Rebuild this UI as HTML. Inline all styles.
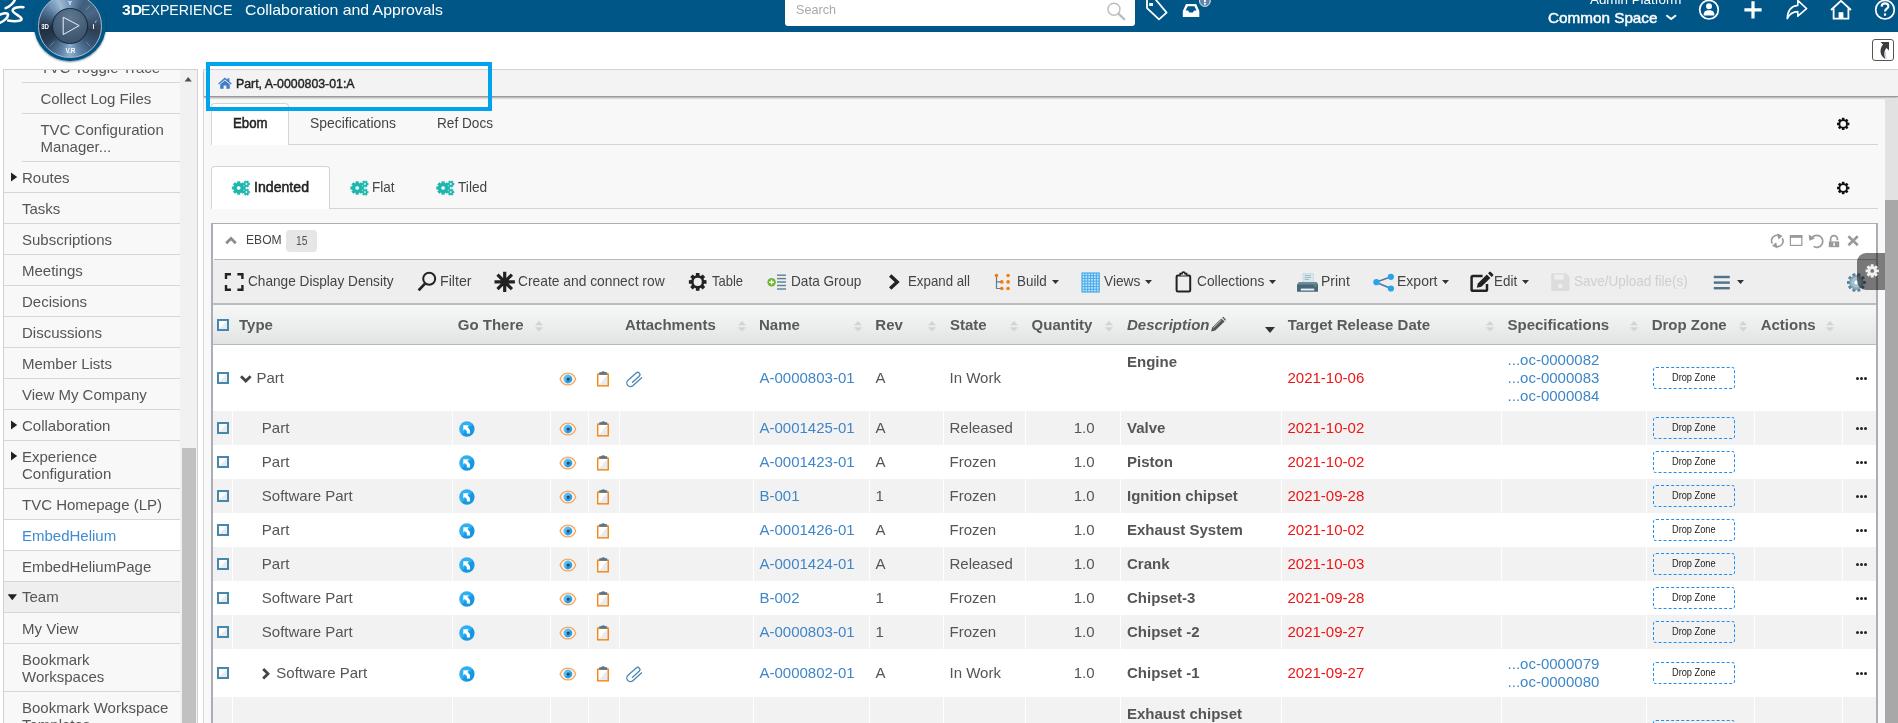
<!DOCTYPE html>
<html><head><meta charset="utf-8"><title>3DEXPERIENCE</title>
<style>
html,body{margin:0;padding:0;}
body{width:1898px;height:723px;overflow:hidden;position:relative;background:#fff;font-family:"Liberation Sans",sans-serif;}
#root{position:absolute;left:0;top:0;width:1898px;height:723px;overflow:hidden;will-change:transform;transform:translateZ(0);}
.b{position:absolute;box-sizing:border-box;}
.t{position:absolute;white-space:nowrap;}
svg{overflow:visible;}
</style></head><body><div id="root">
<div class="b" style="left:0px;top:0px;width:1898px;height:32px;background:#005686;"></div>
<div class="t " style="top:0px;font-size:15px;line-height:20px;color:#fff;font-weight:bold;left:121.70px;transform:scaleX(1.0535);transform-origin:left center;">3D</div>
<div class="t " style="top:0px;font-size:15px;line-height:20px;color:#fff;left:141.30px;transform:scaleX(0.9452);transform-origin:left center;">EXPERIENCE</div>
<div class="t " style="top:0px;font-size:15px;line-height:20px;color:#fff;left:245.00px;transform:scaleX(1.0553);transform-origin:left center;">Collaboration and Approvals</div>
<div class="b" style="left:785px;top:0px;width:350px;height:25.5px;background:#fff;border-radius:0 0 3px 3px;"></div>
<div class="t " style="top:0px;font-size:13px;line-height:20px;color:#aaa;left:796.00px;transform:scaleX(0.9710);transform-origin:left center;">Search</div>
<div class="t " style="top:-10px;font-size:13px;line-height:20px;color:#fff;left:1590.00px;transform:scaleX(1.0296);transform-origin:left center;">Admin Platform</div>
<div class="t " style="top:8px;font-size:15px;line-height:20px;color:#fff;-webkit-text-stroke:0.45px #fff;left:1548.00px;transform:scaleX(1.0181);transform-origin:left center;">Common Space</div>
<div class="b" style="left:3px;top:69px;width:195px;height:660px;background:#f8f8f8;border:1px solid #d2d2d2;"></div>
<div class="b" style="left:180px;top:70px;width:17px;height:660px;background:#f1f1f1;"></div>
<div class="b" style="left:182px;top:448px;width:14px;height:280px;background:#c1c1c1;"></div>
<div class="b" style="left:4px;top:519.5px;width:176px;height:30.5px;background:#fff;"></div>
<div class="b" style="left:4px;top:581.5px;width:176px;height:30.5px;background:#efefef;"></div>
<div class="b" style="left:4px;top:70px;width:176px;height:653px;overflow:hidden;">
<div class="t " style="top:-12px;font-size:15px;line-height:20px;color:#555;left:36.40px;">TVC Toggle Trace</div>
<div class="b" style="left:18px;top:12.0px;width:158px;height:1px;background:#d6d6d6;"></div>
<div class="t " style="top:19px;font-size:15px;line-height:20px;color:#555;left:36.40px;">Collect Log Files</div>
<div class="b" style="left:18px;top:42.5px;width:158px;height:1px;background:#d6d6d6;"></div>
<div class="t " style="top:50px;font-size:15px;line-height:20px;color:#555;left:36.40px;">TVC Configuration</div>
<div class="t " style="top:67px;font-size:15px;line-height:20px;color:#555;left:36.40px;">Manager...</div>
<div class="b" style="left:18px;top:90.5px;width:158px;height:1px;background:#d6d6d6;"></div>
<div class="t " style="top:98px;font-size:15px;line-height:20px;color:#555;left:18.00px;">Routes</div>
<div class="b" style="left:0px;top:121.5px;width:176px;height:1px;background:#d6d6d6;"></div>
<div class="t " style="top:129px;font-size:15px;line-height:20px;color:#555;left:18.00px;">Tasks</div>
<div class="b" style="left:0px;top:152.5px;width:176px;height:1px;background:#d6d6d6;"></div>
<div class="t " style="top:160px;font-size:15px;line-height:20px;color:#555;left:18.00px;">Subscriptions</div>
<div class="b" style="left:0px;top:183.5px;width:176px;height:1px;background:#d6d6d6;"></div>
<div class="t " style="top:191px;font-size:15px;line-height:20px;color:#555;left:18.00px;">Meetings</div>
<div class="b" style="left:0px;top:214.5px;width:176px;height:1px;background:#d6d6d6;"></div>
<div class="t " style="top:222px;font-size:15px;line-height:20px;color:#555;left:18.00px;">Decisions</div>
<div class="b" style="left:0px;top:245.5px;width:176px;height:1px;background:#d6d6d6;"></div>
<div class="t " style="top:253px;font-size:15px;line-height:20px;color:#555;left:18.00px;">Discussions</div>
<div class="b" style="left:0px;top:276.5px;width:176px;height:1px;background:#d6d6d6;"></div>
<div class="t " style="top:284px;font-size:15px;line-height:20px;color:#555;left:18.00px;">Member Lists</div>
<div class="b" style="left:0px;top:307.5px;width:176px;height:1px;background:#d6d6d6;"></div>
<div class="t " style="top:315px;font-size:15px;line-height:20px;color:#555;left:18.00px;">View My Company</div>
<div class="b" style="left:0px;top:338.5px;width:176px;height:1px;background:#d6d6d6;"></div>
<div class="t " style="top:346px;font-size:15px;line-height:20px;color:#555;left:18.00px;">Collaboration</div>
<div class="b" style="left:0px;top:369.5px;width:176px;height:1px;background:#d6d6d6;"></div>
<div class="t " style="top:377px;font-size:15px;line-height:20px;color:#555;left:18.00px;">Experience</div>
<div class="t " style="top:394px;font-size:15px;line-height:20px;color:#555;left:18.00px;">Configuration</div>
<div class="b" style="left:0px;top:417.5px;width:176px;height:1px;background:#d6d6d6;"></div>
<div class="t " style="top:425px;font-size:15px;line-height:20px;color:#555;left:18.00px;">TVC Homepage (LP)</div>
<div class="b" style="left:0px;top:448.5px;width:176px;height:1px;background:#d6d6d6;"></div>
<div class="t " style="top:456px;font-size:15px;line-height:20px;color:#3d8bd1;left:18.00px;">EmbedHelium</div>
<div class="b" style="left:0px;top:479.5px;width:176px;height:1px;background:#d6d6d6;"></div>
<div class="t " style="top:487px;font-size:15px;line-height:20px;color:#555;left:18.00px;">EmbedHeliumPage</div>
<div class="b" style="left:0px;top:510.5px;width:176px;height:1px;background:#d6d6d6;"></div>
<div class="t " style="top:517px;font-size:15px;line-height:20px;color:#555;left:18.00px;">Team</div>
<div class="b" style="left:0px;top:541.5px;width:176px;height:1px;background:#d6d6d6;"></div>
<div class="t " style="top:549px;font-size:15px;line-height:20px;color:#555;left:18.00px;">My View</div>
<div class="b" style="left:0px;top:572.5px;width:176px;height:1px;background:#d6d6d6;"></div>
<div class="t " style="top:580px;font-size:15px;line-height:20px;color:#555;left:18.00px;">Bookmark</div>
<div class="t " style="top:597px;font-size:15px;line-height:20px;color:#555;left:18.00px;">Workspaces</div>
<div class="b" style="left:0px;top:621.0px;width:176px;height:1px;background:#d6d6d6;"></div>
<div class="t " style="top:628px;font-size:15px;line-height:20px;color:#555;left:18.00px;">Bookmark Workspace</div>
<div class="t " style="top:645px;font-size:15px;line-height:20px;color:#555;left:18.00px;">Templates</div>
<div class="b" style="left:0px;top:669.5px;width:176px;height:1px;background:#d6d6d6;"></div>
</div>
<div class="b" style="left:203px;top:69px;width:1700px;height:660px;background:#f8f8f8;border-left:1px solid #d8d8d8;border-top:1px solid #d8d8d8;"></div>
<div class="b" style="left:204px;top:70px;width:1694px;height:27px;background:#f3f3f3;border-bottom:1px solid #9a9a9a;box-shadow:0 1px 2px rgba(0,0,0,.35);"></div>
<div class="t " style="top:74px;font-size:12px;line-height:20px;color:#222;-webkit-text-stroke:0.4px #222;left:236.00px;transform:scaleX(1.0276);transform-origin:left center;">Part, A-0000803-01:A</div>
<div class="b" style="left:1885px;top:98px;width:13px;height:630px;background:#e2e2e2;"></div>
<div class="b" style="left:1885px;top:200px;width:13px;height:530px;background:#a8a8a8;"></div>
<div class="b" style="left:1872px;top:39px;width:22px;height:22px;border:1px solid #555;border-radius:3px;background:#fff;"></div>
<div class="b" style="left:211px;top:144px;width:1667px;height:1px;background:#d4d4d4;"></div>
<div class="b" style="left:211px;top:102.5px;width:78px;height:42.5px;background:#fff;border:1px solid #d4d4d4;border-bottom:none;border-radius:4px 4px 0 0;"></div>
<div class="t " style="top:113px;font-size:14.5px;line-height:20px;color:#222;-webkit-text-stroke:0.5px #222;left:232.70px;transform:scaleX(0.9134);transform-origin:left center;">Ebom</div>
<div class="t " style="top:113px;font-size:14.5px;line-height:20px;color:#444;left:309.50px;transform:scaleX(0.9613);transform-origin:left center;">Specifications</div>
<div class="t " style="top:113px;font-size:14.5px;line-height:20px;color:#444;left:436.50px;transform:scaleX(0.9391);transform-origin:left center;">Ref Docs</div>
<div class="b" style="left:211px;top:208px;width:1667px;height:1px;background:#d4d4d4;"></div>
<div class="b" style="left:211px;top:166px;width:118.5px;height:43px;background:#fff;border:1px solid #d4d4d4;border-bottom:none;border-radius:4px 4px 0 0;"></div>
<div class="t " style="top:177px;font-size:14.5px;line-height:20px;color:#222;-webkit-text-stroke:0.5px #222;left:253.50px;transform:scaleX(0.9744);transform-origin:left center;">Indented</div>
<div class="t " style="top:177px;font-size:14.5px;line-height:20px;color:#444;left:372.30px;transform:scaleX(0.9350);transform-origin:left center;">Flat</div>
<div class="t " style="top:177px;font-size:14.5px;line-height:20px;color:#444;left:458.30px;transform:scaleX(0.9453);transform-origin:left center;">Tiled</div>
<div class="b" style="left:206px;top:62px;width:286px;height:49px;border:4px solid #00a3ee;"></div>
<div class="b" style="left:211px;top:223px;width:1667px;height:510px;background:#fff;border:2px solid #acaeb7;border-top-width:1px;"></div>
<div class="b" style="left:214px;top:259px;width:1662px;height:1px;background:#b6b8be;"></div>
<div class="t " style="top:230px;font-size:13px;line-height:20px;color:#444;left:246.00px;transform:scaleX(0.9299);transform-origin:left center;">EBOM</div>
<div class="b" style="left:286px;top:229.5px;width:31px;height:22px;background:#e6e6e6;border-radius:4px;"></div>
<div class="t " style="top:231px;font-size:12px;line-height:20px;color:#555;left:296.00px;transform:scaleX(0.8616);transform-origin:left center;">15</div>
<div class="b" style="left:213px;top:260px;width:1663px;height:43px;background:#eeeeee;"></div>
<div class="b" style="left:213px;top:303px;width:1663px;height:2px;background:#bcbcbc;"></div>
<div class="t " style="top:271px;font-size:15px;line-height:20px;color:#444;left:248.00px;transform:scaleX(0.9090);transform-origin:left center;">Change Display Density</div>
<div class="t " style="top:271px;font-size:15px;line-height:20px;color:#444;left:440.30px;transform:scaleX(0.9480);transform-origin:left center;">Filter</div>
<div class="t " style="top:271px;font-size:15px;line-height:20px;color:#444;left:518.20px;transform:scaleX(0.9205);transform-origin:left center;">Create and connect row</div>
<div class="t " style="top:271px;font-size:15px;line-height:20px;color:#444;left:712.10px;transform:scaleX(0.8673);transform-origin:left center;">Table</div>
<div class="t " style="top:271px;font-size:15px;line-height:20px;color:#444;left:790.50px;transform:scaleX(0.9066);transform-origin:left center;">Data Group</div>
<div class="t " style="top:271px;font-size:15px;line-height:20px;color:#444;left:907.60px;transform:scaleX(0.8851);transform-origin:left center;">Expand all</div>
<div class="t " style="top:271px;font-size:15px;line-height:20px;color:#444;left:1016.90px;transform:scaleX(0.8935);transform-origin:left center;">Build</div>
<div class="t " style="top:271px;font-size:15px;line-height:20px;color:#444;left:1103.90px;transform:scaleX(0.9159);transform-origin:left center;">Views</div>
<div class="t " style="top:271px;font-size:15px;line-height:20px;color:#444;left:1197.20px;transform:scaleX(0.9174);transform-origin:left center;">Collections</div>
<div class="t " style="top:271px;font-size:15px;line-height:20px;color:#444;left:1321.40px;transform:scaleX(0.9337);transform-origin:left center;">Print</div>
<div class="t " style="top:271px;font-size:15px;line-height:20px;color:#444;left:1397.20px;transform:scaleX(0.9342);transform-origin:left center;">Export</div>
<div class="t " style="top:271px;font-size:15px;line-height:20px;color:#444;left:1494.30px;transform:scaleX(0.8937);transform-origin:left center;">Edit</div>
<div class="t " style="top:271px;font-size:15px;line-height:20px;color:#cfcfcf;left:1574.20px;transform:scaleX(0.8980);transform-origin:left center;">Save/Upload file(s)</div>
<svg class="b" style="left:1051.7px;top:280px;" width="7" height="4" viewBox="0 0 7 4"><path d="M0 0h7L3.5 4z" fill="#333"/></svg>
<svg class="b" style="left:1144.8px;top:280px;" width="7" height="4" viewBox="0 0 7 4"><path d="M0 0h7L3.5 4z" fill="#333"/></svg>
<svg class="b" style="left:1269.3px;top:280px;" width="7" height="4" viewBox="0 0 7 4"><path d="M0 0h7L3.5 4z" fill="#333"/></svg>
<svg class="b" style="left:1442.1px;top:280px;" width="7" height="4" viewBox="0 0 7 4"><path d="M0 0h7L3.5 4z" fill="#333"/></svg>
<svg class="b" style="left:1522.1px;top:280px;" width="7" height="4" viewBox="0 0 7 4"><path d="M0 0h7L3.5 4z" fill="#333"/></svg>
<svg class="b" style="left:1736.5px;top:280px;" width="7" height="4" viewBox="0 0 7 4"><path d="M0 0h7L3.5 4z" fill="#333"/></svg>
<div class="b" style="left:213px;top:305px;width:1663px;height:40px;background:linear-gradient(#f6f7f7,#eceded 55%,#e1e3e3);border-bottom:1px solid #b9babc;"></div>
<div class="t " style="top:315px;font-size:15px;line-height:20px;color:#5a5a5a;font-weight:bold;left:239.00px;">Type</div>
<div class="t " style="top:315px;font-size:15px;line-height:20px;color:#5a5a5a;font-weight:bold;left:457.80px;">Go There</div>
<div class="t " style="top:315px;font-size:15px;line-height:20px;color:#5a5a5a;font-weight:bold;left:624.90px;">Attachments</div>
<div class="t " style="top:315px;font-size:15px;line-height:20px;color:#5a5a5a;font-weight:bold;left:759.00px;">Name</div>
<div class="t " style="top:315px;font-size:15px;line-height:20px;color:#5a5a5a;font-weight:bold;left:875.30px;">Rev</div>
<div class="t " style="top:315px;font-size:15px;line-height:20px;color:#5a5a5a;font-weight:bold;left:949.90px;">State</div>
<div class="t " style="top:315px;font-size:15px;line-height:20px;color:#5a5a5a;font-weight:bold;left:1031.60px;">Quantity</div>
<div class="t " style="top:315px;font-size:15px;line-height:20px;color:#5a5a5a;font-weight:bold;left:1287.80px;">Target Release Date</div>
<div class="t " style="top:315px;font-size:15px;line-height:20px;color:#5a5a5a;font-weight:bold;left:1507.50px;">Specifications</div>
<div class="t " style="top:315px;font-size:15px;line-height:20px;color:#5a5a5a;font-weight:bold;left:1651.70px;">Drop Zone</div>
<div class="t " style="top:315px;font-size:15px;line-height:20px;color:#5a5a5a;font-weight:bold;left:1760.70px;">Actions</div>
<div class="t " style="top:315px;font-size:15px;line-height:20px;color:#5a5a5a;font-weight:bold;font-style:italic;left:1127.00px;">Description</div>
<svg class="b" style="left:535px;top:321.4px;" width="8" height="10.4" viewBox="0 0 8 10.4"><path d="M4 0l4 4.2H0zM4 10.4l4-4.2H0z" fill="#d2d3d3"/></svg>
<svg class="b" style="left:737.7px;top:321.4px;" width="8" height="10.4" viewBox="0 0 8 10.4"><path d="M4 0l4 4.2H0zM4 10.4l4-4.2H0z" fill="#d2d3d3"/></svg>
<svg class="b" style="left:854px;top:321.4px;" width="8" height="10.4" viewBox="0 0 8 10.4"><path d="M4 0l4 4.2H0zM4 10.4l4-4.2H0z" fill="#d2d3d3"/></svg>
<svg class="b" style="left:927.8px;top:321.4px;" width="8" height="10.4" viewBox="0 0 8 10.4"><path d="M4 0l4 4.2H0zM4 10.4l4-4.2H0z" fill="#d2d3d3"/></svg>
<svg class="b" style="left:1010px;top:321.4px;" width="8" height="10.4" viewBox="0 0 8 10.4"><path d="M4 0l4 4.2H0zM4 10.4l4-4.2H0z" fill="#d2d3d3"/></svg>
<svg class="b" style="left:1105px;top:321.4px;" width="8" height="10.4" viewBox="0 0 8 10.4"><path d="M4 0l4 4.2H0zM4 10.4l4-4.2H0z" fill="#d2d3d3"/></svg>
<svg class="b" style="left:1485.5px;top:321.4px;" width="8" height="10.4" viewBox="0 0 8 10.4"><path d="M4 0l4 4.2H0zM4 10.4l4-4.2H0z" fill="#d2d3d3"/></svg>
<svg class="b" style="left:1630.4px;top:321.4px;" width="8" height="10.4" viewBox="0 0 8 10.4"><path d="M4 0l4 4.2H0zM4 10.4l4-4.2H0z" fill="#d2d3d3"/></svg>
<svg class="b" style="left:1739px;top:321.4px;" width="8" height="10.4" viewBox="0 0 8 10.4"><path d="M4 0l4 4.2H0zM4 10.4l4-4.2H0z" fill="#d2d3d3"/></svg>
<svg class="b" style="left:1826.1px;top:321.4px;" width="8" height="10.4" viewBox="0 0 8 10.4"><path d="M4 0l4 4.2H0zM4 10.4l4-4.2H0z" fill="#d2d3d3"/></svg>
<svg class="b" style="left:1264.5px;top:327px;" width="10" height="6" viewBox="0 0 10 6"><path d="M0 0h10L5 6z" fill="#333"/></svg>
<div class="b" style="left:217.1px;top:372.1px;width:12.2px;height:12.2px;border:2px solid #4587ad;background:linear-gradient(135deg,#fff 42%,#e8eaed 58%);"></div>
<svg class="b" style="left:240.2px;top:375.4px;" width="11.6" height="7.4" viewBox="0 0 11.6 7.4"><path d="M1 1.2l4.8 4.8L10.6 1.2" fill="none" stroke="#444" stroke-width="2.8"/></svg>
<div class="t " style="top:368px;font-size:15px;line-height:20px;color:#555;left:256.50px;">Part</div>
<div class="t " style="top:368px;font-size:15px;line-height:20px;color:#3f86c8;left:759.50px;">A-0000803-01</div>
<div class="t " style="top:368px;font-size:15px;line-height:20px;color:#555;left:875.50px;">A</div>
<div class="t " style="top:368px;font-size:15px;line-height:20px;color:#555;left:949.50px;">In Work</div>
<div class="t " style="top:352px;font-size:15px;line-height:20px;color:#555;font-weight:bold;left:1127.00px;">Engine</div>
<div class="t " style="top:368px;font-size:15px;line-height:20px;color:#f01414;left:1287.50px;">2021-10-06</div>
<div class="t " style="top:350px;font-size:15px;line-height:20px;color:#3f86c8;left:1507.60px;">...oc-0000082</div>
<div class="t " style="top:368px;font-size:15px;line-height:20px;color:#3f86c8;left:1507.60px;">...oc-0000083</div>
<div class="t " style="top:386px;font-size:15px;line-height:20px;color:#3f86c8;left:1507.60px;">...oc-0000084</div>
<svg class="b" style="left:0;top:0;" width="1898" height="723" viewBox="0 0 1898 723"><path d="M560.1 379.0 C563.2 371.1 572.6 371.1 575.7 379.0 C572.6 386.9 563.2 386.9 560.1 379.0Z" fill="#fdf6ee" stroke="#f4a55c" stroke-width="1.25"/><circle cx="567.9" cy="379.0" r="4.4" fill="url(#ir)"/><circle cx="568.1" cy="379.1" r="1.6" fill="#34465a"/><rect x="597.75" y="374.15" width="10.5" height="11.7" fill="url(#cb)" stroke="#f57c00" stroke-width="1.3"/><path d="M599.2 374.8 V372.2 H601 Q603.2 370.2 605.4 372.2 H607.2 V374.8Z" fill="#5a7488"/><g transform="translate(634.2 378.8) rotate(-42)" fill="none" stroke="#4a88b4" stroke-width="1.3"><path d="M-4.2 1.4 H5.4 A2.2 2.2 0 0 0 5.4 -3 H-5.6 A3.6 3.6 0 0 0 -5.6 4.2 H6.6"/></g></svg>
<div class="b" style="left:1653px;top:367.0px;width:82px;height:22px;border:1px dashed #1e8ff5;border-radius:3px;"></div>
<div class="t " style="top:368px;font-size:10px;line-height:20px;color:#222;left:1671.70px;transform:scaleX(0.9227);transform-origin:left center;">Drop Zone</div>
<div class="b" style="left:1855.5px;top:376.8px;width:3px;height:3px;background:#222;border-radius:50%;"></div>
<div class="b" style="left:1859.9px;top:376.8px;width:3px;height:3px;background:#222;border-radius:50%;"></div>
<div class="b" style="left:1864.3px;top:376.8px;width:3px;height:3px;background:#222;border-radius:50%;"></div>
<div class="b" style="left:213px;top:411px;width:19px;height:34px;background:#f2f2f2;"></div>
<div class="b" style="left:233px;top:411px;width:219px;height:34px;background:#f2f2f2;"></div>
<div class="b" style="left:453px;top:411px;width:97px;height:34px;background:#f2f2f2;"></div>
<div class="b" style="left:551px;top:411px;width:37px;height:34px;background:#f2f2f2;"></div>
<div class="b" style="left:589px;top:411px;width:30px;height:34px;background:#f2f2f2;"></div>
<div class="b" style="left:620px;top:411px;width:133px;height:34px;background:#f2f2f2;"></div>
<div class="b" style="left:754px;top:411px;width:115px;height:34px;background:#f2f2f2;"></div>
<div class="b" style="left:870px;top:411px;width:73px;height:34px;background:#f2f2f2;"></div>
<div class="b" style="left:944px;top:411px;width:81px;height:34px;background:#f2f2f2;"></div>
<div class="b" style="left:1026px;top:411px;width:94px;height:34px;background:#f2f2f2;"></div>
<div class="b" style="left:1121px;top:411px;width:160px;height:34px;background:#f2f2f2;"></div>
<div class="b" style="left:1282px;top:411px;width:219px;height:34px;background:#f2f2f2;"></div>
<div class="b" style="left:1502px;top:411px;width:144px;height:34px;background:#f2f2f2;"></div>
<div class="b" style="left:1647px;top:411px;width:107px;height:34px;background:#f2f2f2;"></div>
<div class="b" style="left:1755px;top:411px;width:87px;height:34px;background:#f2f2f2;"></div>
<div class="b" style="left:1843px;top:411px;width:33px;height:34px;background:#f2f2f2;"></div>
<div class="b" style="left:217.1px;top:422.1px;width:12.2px;height:12.2px;border:2px solid #4587ad;background:linear-gradient(135deg,#fff 42%,#e8eaed 58%);"></div>
<div class="t " style="top:418px;font-size:15px;line-height:20px;color:#555;left:261.80px;">Part</div>
<div class="t " style="top:418px;font-size:15px;line-height:20px;color:#3f86c8;left:759.50px;">A-0001425-01</div>
<div class="t " style="top:418px;font-size:15px;line-height:20px;color:#555;left:875.50px;">A</div>
<div class="t " style="top:418px;font-size:15px;line-height:20px;color:#555;left:949.50px;">Released</div>
<div class="t " style="top:418px;font-size:15px;line-height:20px;color:#555;right:803.50px;">1.0</div>
<div class="t " style="top:418px;font-size:15px;line-height:20px;color:#555;font-weight:bold;left:1127.00px;">Valve</div>
<div class="t " style="top:418px;font-size:15px;line-height:20px;color:#f01414;left:1287.50px;">2021-10-02</div>
<svg class="b" style="left:0;top:0;" width="1898" height="723" viewBox="0 0 1898 723"><circle cx="466.9" cy="429.0" r="7.7" fill="url(#gt)"/><path d="M463.30 425.30 L468.80 425.30 L467.40 426.90 L470.00 429.90 L470.00 433.60 L466.80 433.60 L466.80 431.10 L464.80 428.90 L463.30 430.60Z" fill="#fff"/><path d="M560.1 429.0 C563.2 421.1 572.6 421.1 575.7 429.0 C572.6 436.9 563.2 436.9 560.1 429.0Z" fill="#fdf6ee" stroke="#f4a55c" stroke-width="1.25"/><circle cx="567.9" cy="429.0" r="4.4" fill="url(#ir)"/><circle cx="568.1" cy="429.1" r="1.6" fill="#34465a"/><rect x="597.75" y="424.15" width="10.5" height="11.7" fill="url(#cb)" stroke="#f57c00" stroke-width="1.3"/><path d="M599.2 424.8 V422.2 H601 Q603.2 420.2 605.4 422.2 H607.2 V424.8Z" fill="#5a7488"/></svg>
<div class="b" style="left:1653px;top:417.0px;width:82px;height:22px;border:1px dashed #1e8ff5;border-radius:3px;"></div>
<div class="t " style="top:418px;font-size:10px;line-height:20px;color:#222;left:1671.70px;transform:scaleX(0.9227);transform-origin:left center;">Drop Zone</div>
<div class="b" style="left:1855.5px;top:426.8px;width:3px;height:3px;background:#222;border-radius:50%;"></div>
<div class="b" style="left:1859.9px;top:426.8px;width:3px;height:3px;background:#222;border-radius:50%;"></div>
<div class="b" style="left:1864.3px;top:426.8px;width:3px;height:3px;background:#222;border-radius:50%;"></div>
<div class="b" style="left:217.1px;top:456.1px;width:12.2px;height:12.2px;border:2px solid #4587ad;background:linear-gradient(135deg,#fff 42%,#e8eaed 58%);"></div>
<div class="t " style="top:452px;font-size:15px;line-height:20px;color:#555;left:261.80px;">Part</div>
<div class="t " style="top:452px;font-size:15px;line-height:20px;color:#3f86c8;left:759.50px;">A-0001423-01</div>
<div class="t " style="top:452px;font-size:15px;line-height:20px;color:#555;left:875.50px;">A</div>
<div class="t " style="top:452px;font-size:15px;line-height:20px;color:#555;left:949.50px;">Frozen</div>
<div class="t " style="top:452px;font-size:15px;line-height:20px;color:#555;right:803.50px;">1.0</div>
<div class="t " style="top:452px;font-size:15px;line-height:20px;color:#555;font-weight:bold;left:1127.00px;">Piston</div>
<div class="t " style="top:452px;font-size:15px;line-height:20px;color:#f01414;left:1287.50px;">2021-10-02</div>
<svg class="b" style="left:0;top:0;" width="1898" height="723" viewBox="0 0 1898 723"><circle cx="466.9" cy="463.0" r="7.7" fill="url(#gt)"/><path d="M463.30 459.30 L468.80 459.30 L467.40 460.90 L470.00 463.90 L470.00 467.60 L466.80 467.60 L466.80 465.10 L464.80 462.90 L463.30 464.60Z" fill="#fff"/><path d="M560.1 463.0 C563.2 455.1 572.6 455.1 575.7 463.0 C572.6 470.9 563.2 470.9 560.1 463.0Z" fill="#fdf6ee" stroke="#f4a55c" stroke-width="1.25"/><circle cx="567.9" cy="463.0" r="4.4" fill="url(#ir)"/><circle cx="568.1" cy="463.1" r="1.6" fill="#34465a"/><rect x="597.75" y="458.15" width="10.5" height="11.7" fill="url(#cb)" stroke="#f57c00" stroke-width="1.3"/><path d="M599.2 458.8 V456.2 H601 Q603.2 454.2 605.4 456.2 H607.2 V458.8Z" fill="#5a7488"/></svg>
<div class="b" style="left:1653px;top:451.0px;width:82px;height:22px;border:1px dashed #1e8ff5;border-radius:3px;"></div>
<div class="t " style="top:452px;font-size:10px;line-height:20px;color:#222;left:1671.70px;transform:scaleX(0.9227);transform-origin:left center;">Drop Zone</div>
<div class="b" style="left:1855.5px;top:460.8px;width:3px;height:3px;background:#222;border-radius:50%;"></div>
<div class="b" style="left:1859.9px;top:460.8px;width:3px;height:3px;background:#222;border-radius:50%;"></div>
<div class="b" style="left:1864.3px;top:460.8px;width:3px;height:3px;background:#222;border-radius:50%;"></div>
<div class="b" style="left:213px;top:479px;width:19px;height:34px;background:#f2f2f2;"></div>
<div class="b" style="left:233px;top:479px;width:219px;height:34px;background:#f2f2f2;"></div>
<div class="b" style="left:453px;top:479px;width:97px;height:34px;background:#f2f2f2;"></div>
<div class="b" style="left:551px;top:479px;width:37px;height:34px;background:#f2f2f2;"></div>
<div class="b" style="left:589px;top:479px;width:30px;height:34px;background:#f2f2f2;"></div>
<div class="b" style="left:620px;top:479px;width:133px;height:34px;background:#f2f2f2;"></div>
<div class="b" style="left:754px;top:479px;width:115px;height:34px;background:#f2f2f2;"></div>
<div class="b" style="left:870px;top:479px;width:73px;height:34px;background:#f2f2f2;"></div>
<div class="b" style="left:944px;top:479px;width:81px;height:34px;background:#f2f2f2;"></div>
<div class="b" style="left:1026px;top:479px;width:94px;height:34px;background:#f2f2f2;"></div>
<div class="b" style="left:1121px;top:479px;width:160px;height:34px;background:#f2f2f2;"></div>
<div class="b" style="left:1282px;top:479px;width:219px;height:34px;background:#f2f2f2;"></div>
<div class="b" style="left:1502px;top:479px;width:144px;height:34px;background:#f2f2f2;"></div>
<div class="b" style="left:1647px;top:479px;width:107px;height:34px;background:#f2f2f2;"></div>
<div class="b" style="left:1755px;top:479px;width:87px;height:34px;background:#f2f2f2;"></div>
<div class="b" style="left:1843px;top:479px;width:33px;height:34px;background:#f2f2f2;"></div>
<div class="b" style="left:217.1px;top:490.1px;width:12.2px;height:12.2px;border:2px solid #4587ad;background:linear-gradient(135deg,#fff 42%,#e8eaed 58%);"></div>
<div class="t " style="top:486px;font-size:15px;line-height:20px;color:#555;left:261.80px;">Software Part</div>
<div class="t " style="top:486px;font-size:15px;line-height:20px;color:#3f86c8;left:759.50px;">B-001</div>
<div class="t " style="top:486px;font-size:15px;line-height:20px;color:#555;left:875.50px;">1</div>
<div class="t " style="top:486px;font-size:15px;line-height:20px;color:#555;left:949.50px;">Frozen</div>
<div class="t " style="top:486px;font-size:15px;line-height:20px;color:#555;right:803.50px;">1.0</div>
<div class="t " style="top:486px;font-size:15px;line-height:20px;color:#555;font-weight:bold;left:1127.00px;">Ignition chipset</div>
<div class="t " style="top:486px;font-size:15px;line-height:20px;color:#f01414;left:1287.50px;">2021-09-28</div>
<svg class="b" style="left:0;top:0;" width="1898" height="723" viewBox="0 0 1898 723"><circle cx="466.9" cy="497.0" r="7.7" fill="url(#gt)"/><path d="M463.30 493.30 L468.80 493.30 L467.40 494.90 L470.00 497.90 L470.00 501.60 L466.80 501.60 L466.80 499.10 L464.80 496.90 L463.30 498.60Z" fill="#fff"/><path d="M560.1 497.0 C563.2 489.1 572.6 489.1 575.7 497.0 C572.6 504.9 563.2 504.9 560.1 497.0Z" fill="#fdf6ee" stroke="#f4a55c" stroke-width="1.25"/><circle cx="567.9" cy="497.0" r="4.4" fill="url(#ir)"/><circle cx="568.1" cy="497.1" r="1.6" fill="#34465a"/><rect x="597.75" y="492.15" width="10.5" height="11.7" fill="url(#cb)" stroke="#f57c00" stroke-width="1.3"/><path d="M599.2 492.8 V490.2 H601 Q603.2 488.2 605.4 490.2 H607.2 V492.8Z" fill="#5a7488"/></svg>
<div class="b" style="left:1653px;top:485.0px;width:82px;height:22px;border:1px dashed #1e8ff5;border-radius:3px;"></div>
<div class="t " style="top:486px;font-size:10px;line-height:20px;color:#222;left:1671.70px;transform:scaleX(0.9227);transform-origin:left center;">Drop Zone</div>
<div class="b" style="left:1855.5px;top:494.8px;width:3px;height:3px;background:#222;border-radius:50%;"></div>
<div class="b" style="left:1859.9px;top:494.8px;width:3px;height:3px;background:#222;border-radius:50%;"></div>
<div class="b" style="left:1864.3px;top:494.8px;width:3px;height:3px;background:#222;border-radius:50%;"></div>
<div class="b" style="left:217.1px;top:524.1px;width:12.2px;height:12.2px;border:2px solid #4587ad;background:linear-gradient(135deg,#fff 42%,#e8eaed 58%);"></div>
<div class="t " style="top:520px;font-size:15px;line-height:20px;color:#555;left:261.80px;">Part</div>
<div class="t " style="top:520px;font-size:15px;line-height:20px;color:#3f86c8;left:759.50px;">A-0001426-01</div>
<div class="t " style="top:520px;font-size:15px;line-height:20px;color:#555;left:875.50px;">A</div>
<div class="t " style="top:520px;font-size:15px;line-height:20px;color:#555;left:949.50px;">Frozen</div>
<div class="t " style="top:520px;font-size:15px;line-height:20px;color:#555;right:803.50px;">1.0</div>
<div class="t " style="top:520px;font-size:15px;line-height:20px;color:#555;font-weight:bold;left:1127.00px;">Exhaust System</div>
<div class="t " style="top:520px;font-size:15px;line-height:20px;color:#f01414;left:1287.50px;">2021-10-02</div>
<svg class="b" style="left:0;top:0;" width="1898" height="723" viewBox="0 0 1898 723"><circle cx="466.9" cy="531.0" r="7.7" fill="url(#gt)"/><path d="M463.30 527.30 L468.80 527.30 L467.40 528.90 L470.00 531.90 L470.00 535.60 L466.80 535.60 L466.80 533.10 L464.80 530.90 L463.30 532.60Z" fill="#fff"/><path d="M560.1 531.0 C563.2 523.1 572.6 523.1 575.7 531.0 C572.6 538.9 563.2 538.9 560.1 531.0Z" fill="#fdf6ee" stroke="#f4a55c" stroke-width="1.25"/><circle cx="567.9" cy="531.0" r="4.4" fill="url(#ir)"/><circle cx="568.1" cy="531.1" r="1.6" fill="#34465a"/><rect x="597.75" y="526.15" width="10.5" height="11.7" fill="url(#cb)" stroke="#f57c00" stroke-width="1.3"/><path d="M599.2 526.8 V524.2 H601 Q603.2 522.2 605.4 524.2 H607.2 V526.8Z" fill="#5a7488"/></svg>
<div class="b" style="left:1653px;top:519.0px;width:82px;height:22px;border:1px dashed #1e8ff5;border-radius:3px;"></div>
<div class="t " style="top:520px;font-size:10px;line-height:20px;color:#222;left:1671.70px;transform:scaleX(0.9227);transform-origin:left center;">Drop Zone</div>
<div class="b" style="left:1855.5px;top:528.8px;width:3px;height:3px;background:#222;border-radius:50%;"></div>
<div class="b" style="left:1859.9px;top:528.8px;width:3px;height:3px;background:#222;border-radius:50%;"></div>
<div class="b" style="left:1864.3px;top:528.8px;width:3px;height:3px;background:#222;border-radius:50%;"></div>
<div class="b" style="left:213px;top:547px;width:19px;height:34px;background:#f2f2f2;"></div>
<div class="b" style="left:233px;top:547px;width:219px;height:34px;background:#f2f2f2;"></div>
<div class="b" style="left:453px;top:547px;width:97px;height:34px;background:#f2f2f2;"></div>
<div class="b" style="left:551px;top:547px;width:37px;height:34px;background:#f2f2f2;"></div>
<div class="b" style="left:589px;top:547px;width:30px;height:34px;background:#f2f2f2;"></div>
<div class="b" style="left:620px;top:547px;width:133px;height:34px;background:#f2f2f2;"></div>
<div class="b" style="left:754px;top:547px;width:115px;height:34px;background:#f2f2f2;"></div>
<div class="b" style="left:870px;top:547px;width:73px;height:34px;background:#f2f2f2;"></div>
<div class="b" style="left:944px;top:547px;width:81px;height:34px;background:#f2f2f2;"></div>
<div class="b" style="left:1026px;top:547px;width:94px;height:34px;background:#f2f2f2;"></div>
<div class="b" style="left:1121px;top:547px;width:160px;height:34px;background:#f2f2f2;"></div>
<div class="b" style="left:1282px;top:547px;width:219px;height:34px;background:#f2f2f2;"></div>
<div class="b" style="left:1502px;top:547px;width:144px;height:34px;background:#f2f2f2;"></div>
<div class="b" style="left:1647px;top:547px;width:107px;height:34px;background:#f2f2f2;"></div>
<div class="b" style="left:1755px;top:547px;width:87px;height:34px;background:#f2f2f2;"></div>
<div class="b" style="left:1843px;top:547px;width:33px;height:34px;background:#f2f2f2;"></div>
<div class="b" style="left:217.1px;top:558.1px;width:12.2px;height:12.2px;border:2px solid #4587ad;background:linear-gradient(135deg,#fff 42%,#e8eaed 58%);"></div>
<div class="t " style="top:554px;font-size:15px;line-height:20px;color:#555;left:261.80px;">Part</div>
<div class="t " style="top:554px;font-size:15px;line-height:20px;color:#3f86c8;left:759.50px;">A-0001424-01</div>
<div class="t " style="top:554px;font-size:15px;line-height:20px;color:#555;left:875.50px;">A</div>
<div class="t " style="top:554px;font-size:15px;line-height:20px;color:#555;left:949.50px;">Released</div>
<div class="t " style="top:554px;font-size:15px;line-height:20px;color:#555;right:803.50px;">1.0</div>
<div class="t " style="top:554px;font-size:15px;line-height:20px;color:#555;font-weight:bold;left:1127.00px;">Crank</div>
<div class="t " style="top:554px;font-size:15px;line-height:20px;color:#f01414;left:1287.50px;">2021-10-03</div>
<svg class="b" style="left:0;top:0;" width="1898" height="723" viewBox="0 0 1898 723"><circle cx="466.9" cy="565.0" r="7.7" fill="url(#gt)"/><path d="M463.30 561.30 L468.80 561.30 L467.40 562.90 L470.00 565.90 L470.00 569.60 L466.80 569.60 L466.80 567.10 L464.80 564.90 L463.30 566.60Z" fill="#fff"/><path d="M560.1 565.0 C563.2 557.1 572.6 557.1 575.7 565.0 C572.6 572.9 563.2 572.9 560.1 565.0Z" fill="#fdf6ee" stroke="#f4a55c" stroke-width="1.25"/><circle cx="567.9" cy="565.0" r="4.4" fill="url(#ir)"/><circle cx="568.1" cy="565.1" r="1.6" fill="#34465a"/><rect x="597.75" y="560.15" width="10.5" height="11.7" fill="url(#cb)" stroke="#f57c00" stroke-width="1.3"/><path d="M599.2 560.8 V558.2 H601 Q603.2 556.2 605.4 558.2 H607.2 V560.8Z" fill="#5a7488"/></svg>
<div class="b" style="left:1653px;top:553.0px;width:82px;height:22px;border:1px dashed #1e8ff5;border-radius:3px;"></div>
<div class="t " style="top:554px;font-size:10px;line-height:20px;color:#222;left:1671.70px;transform:scaleX(0.9227);transform-origin:left center;">Drop Zone</div>
<div class="b" style="left:1855.5px;top:562.8px;width:3px;height:3px;background:#222;border-radius:50%;"></div>
<div class="b" style="left:1859.9px;top:562.8px;width:3px;height:3px;background:#222;border-radius:50%;"></div>
<div class="b" style="left:1864.3px;top:562.8px;width:3px;height:3px;background:#222;border-radius:50%;"></div>
<div class="b" style="left:217.1px;top:592.1px;width:12.2px;height:12.2px;border:2px solid #4587ad;background:linear-gradient(135deg,#fff 42%,#e8eaed 58%);"></div>
<div class="t " style="top:588px;font-size:15px;line-height:20px;color:#555;left:261.80px;">Software Part</div>
<div class="t " style="top:588px;font-size:15px;line-height:20px;color:#3f86c8;left:759.50px;">B-002</div>
<div class="t " style="top:588px;font-size:15px;line-height:20px;color:#555;left:875.50px;">1</div>
<div class="t " style="top:588px;font-size:15px;line-height:20px;color:#555;left:949.50px;">Frozen</div>
<div class="t " style="top:588px;font-size:15px;line-height:20px;color:#555;right:803.50px;">1.0</div>
<div class="t " style="top:588px;font-size:15px;line-height:20px;color:#555;font-weight:bold;left:1127.00px;">Chipset-3</div>
<div class="t " style="top:588px;font-size:15px;line-height:20px;color:#f01414;left:1287.50px;">2021-09-28</div>
<svg class="b" style="left:0;top:0;" width="1898" height="723" viewBox="0 0 1898 723"><circle cx="466.9" cy="599.0" r="7.7" fill="url(#gt)"/><path d="M463.30 595.30 L468.80 595.30 L467.40 596.90 L470.00 599.90 L470.00 603.60 L466.80 603.60 L466.80 601.10 L464.80 598.90 L463.30 600.60Z" fill="#fff"/><path d="M560.1 599.0 C563.2 591.1 572.6 591.1 575.7 599.0 C572.6 606.9 563.2 606.9 560.1 599.0Z" fill="#fdf6ee" stroke="#f4a55c" stroke-width="1.25"/><circle cx="567.9" cy="599.0" r="4.4" fill="url(#ir)"/><circle cx="568.1" cy="599.1" r="1.6" fill="#34465a"/><rect x="597.75" y="594.15" width="10.5" height="11.7" fill="url(#cb)" stroke="#f57c00" stroke-width="1.3"/><path d="M599.2 594.8 V592.2 H601 Q603.2 590.2 605.4 592.2 H607.2 V594.8Z" fill="#5a7488"/></svg>
<div class="b" style="left:1653px;top:587.0px;width:82px;height:22px;border:1px dashed #1e8ff5;border-radius:3px;"></div>
<div class="t " style="top:588px;font-size:10px;line-height:20px;color:#222;left:1671.70px;transform:scaleX(0.9227);transform-origin:left center;">Drop Zone</div>
<div class="b" style="left:1855.5px;top:596.8px;width:3px;height:3px;background:#222;border-radius:50%;"></div>
<div class="b" style="left:1859.9px;top:596.8px;width:3px;height:3px;background:#222;border-radius:50%;"></div>
<div class="b" style="left:1864.3px;top:596.8px;width:3px;height:3px;background:#222;border-radius:50%;"></div>
<div class="b" style="left:213px;top:615px;width:19px;height:34px;background:#f2f2f2;"></div>
<div class="b" style="left:233px;top:615px;width:219px;height:34px;background:#f2f2f2;"></div>
<div class="b" style="left:453px;top:615px;width:97px;height:34px;background:#f2f2f2;"></div>
<div class="b" style="left:551px;top:615px;width:37px;height:34px;background:#f2f2f2;"></div>
<div class="b" style="left:589px;top:615px;width:30px;height:34px;background:#f2f2f2;"></div>
<div class="b" style="left:620px;top:615px;width:133px;height:34px;background:#f2f2f2;"></div>
<div class="b" style="left:754px;top:615px;width:115px;height:34px;background:#f2f2f2;"></div>
<div class="b" style="left:870px;top:615px;width:73px;height:34px;background:#f2f2f2;"></div>
<div class="b" style="left:944px;top:615px;width:81px;height:34px;background:#f2f2f2;"></div>
<div class="b" style="left:1026px;top:615px;width:94px;height:34px;background:#f2f2f2;"></div>
<div class="b" style="left:1121px;top:615px;width:160px;height:34px;background:#f2f2f2;"></div>
<div class="b" style="left:1282px;top:615px;width:219px;height:34px;background:#f2f2f2;"></div>
<div class="b" style="left:1502px;top:615px;width:144px;height:34px;background:#f2f2f2;"></div>
<div class="b" style="left:1647px;top:615px;width:107px;height:34px;background:#f2f2f2;"></div>
<div class="b" style="left:1755px;top:615px;width:87px;height:34px;background:#f2f2f2;"></div>
<div class="b" style="left:1843px;top:615px;width:33px;height:34px;background:#f2f2f2;"></div>
<div class="b" style="left:217.1px;top:626.1px;width:12.2px;height:12.2px;border:2px solid #4587ad;background:linear-gradient(135deg,#fff 42%,#e8eaed 58%);"></div>
<div class="t " style="top:622px;font-size:15px;line-height:20px;color:#555;left:261.80px;">Software Part</div>
<div class="t " style="top:622px;font-size:15px;line-height:20px;color:#3f86c8;left:759.50px;">A-0000803-01</div>
<div class="t " style="top:622px;font-size:15px;line-height:20px;color:#555;left:875.50px;">1</div>
<div class="t " style="top:622px;font-size:15px;line-height:20px;color:#555;left:949.50px;">Frozen</div>
<div class="t " style="top:622px;font-size:15px;line-height:20px;color:#555;right:803.50px;">1.0</div>
<div class="t " style="top:622px;font-size:15px;line-height:20px;color:#555;font-weight:bold;left:1127.00px;">Chipset -2</div>
<div class="t " style="top:622px;font-size:15px;line-height:20px;color:#f01414;left:1287.50px;">2021-09-27</div>
<svg class="b" style="left:0;top:0;" width="1898" height="723" viewBox="0 0 1898 723"><circle cx="466.9" cy="633.0" r="7.7" fill="url(#gt)"/><path d="M463.30 629.30 L468.80 629.30 L467.40 630.90 L470.00 633.90 L470.00 637.60 L466.80 637.60 L466.80 635.10 L464.80 632.90 L463.30 634.60Z" fill="#fff"/><path d="M560.1 633.0 C563.2 625.1 572.6 625.1 575.7 633.0 C572.6 640.9 563.2 640.9 560.1 633.0Z" fill="#fdf6ee" stroke="#f4a55c" stroke-width="1.25"/><circle cx="567.9" cy="633.0" r="4.4" fill="url(#ir)"/><circle cx="568.1" cy="633.1" r="1.6" fill="#34465a"/><rect x="597.75" y="628.15" width="10.5" height="11.7" fill="url(#cb)" stroke="#f57c00" stroke-width="1.3"/><path d="M599.2 628.8 V626.2 H601 Q603.2 624.2 605.4 626.2 H607.2 V628.8Z" fill="#5a7488"/></svg>
<div class="b" style="left:1653px;top:621.0px;width:82px;height:22px;border:1px dashed #1e8ff5;border-radius:3px;"></div>
<div class="t " style="top:622px;font-size:10px;line-height:20px;color:#222;left:1671.70px;transform:scaleX(0.9227);transform-origin:left center;">Drop Zone</div>
<div class="b" style="left:1855.5px;top:630.8px;width:3px;height:3px;background:#222;border-radius:50%;"></div>
<div class="b" style="left:1859.9px;top:630.8px;width:3px;height:3px;background:#222;border-radius:50%;"></div>
<div class="b" style="left:1864.3px;top:630.8px;width:3px;height:3px;background:#222;border-radius:50%;"></div>
<div class="b" style="left:217.1px;top:667.1px;width:12.2px;height:12.2px;border:2px solid #4587ad;background:linear-gradient(135deg,#fff 42%,#e8eaed 58%);"></div>
<svg class="b" style="left:262.3px;top:668.2px;" width="7.4" height="11.6" viewBox="0 0 7.4 11.6"><path d="M1.2 1l4.8 4.8L1.2 10.6" fill="none" stroke="#444" stroke-width="2.8"/></svg>
<div class="t " style="top:663px;font-size:15px;line-height:20px;color:#555;left:276.30px;">Software Part</div>
<div class="t " style="top:663px;font-size:15px;line-height:20px;color:#3f86c8;left:759.50px;">A-0000802-01</div>
<div class="t " style="top:663px;font-size:15px;line-height:20px;color:#555;left:875.50px;">A</div>
<div class="t " style="top:663px;font-size:15px;line-height:20px;color:#555;left:949.50px;">In Work</div>
<div class="t " style="top:663px;font-size:15px;line-height:20px;color:#555;right:803.50px;">1.0</div>
<div class="t " style="top:663px;font-size:15px;line-height:20px;color:#555;font-weight:bold;left:1127.00px;">Chipset -1</div>
<div class="t " style="top:663px;font-size:15px;line-height:20px;color:#f01414;left:1287.50px;">2021-09-27</div>
<div class="t " style="top:654px;font-size:15px;line-height:20px;color:#3f86c8;left:1507.60px;">...oc-0000079</div>
<div class="t " style="top:672px;font-size:15px;line-height:20px;color:#3f86c8;left:1507.60px;">...oc-0000080</div>
<svg class="b" style="left:0;top:0;" width="1898" height="723" viewBox="0 0 1898 723"><circle cx="466.9" cy="674.0" r="7.7" fill="url(#gt)"/><path d="M463.30 670.30 L468.80 670.30 L467.40 671.90 L470.00 674.90 L470.00 678.60 L466.80 678.60 L466.80 676.10 L464.80 673.90 L463.30 675.60Z" fill="#fff"/><path d="M560.1 674.0 C563.2 666.1 572.6 666.1 575.7 674.0 C572.6 681.9 563.2 681.9 560.1 674.0Z" fill="#fdf6ee" stroke="#f4a55c" stroke-width="1.25"/><circle cx="567.9" cy="674.0" r="4.4" fill="url(#ir)"/><circle cx="568.1" cy="674.1" r="1.6" fill="#34465a"/><rect x="597.75" y="669.15" width="10.5" height="11.7" fill="url(#cb)" stroke="#f57c00" stroke-width="1.3"/><path d="M599.2 669.8 V667.2 H601 Q603.2 665.2 605.4 667.2 H607.2 V669.8Z" fill="#5a7488"/><g transform="translate(634.2 673.8) rotate(-42)" fill="none" stroke="#4a88b4" stroke-width="1.3"><path d="M-4.2 1.4 H5.4 A2.2 2.2 0 0 0 5.4 -3 H-5.6 A3.6 3.6 0 0 0 -5.6 4.2 H6.6"/></g></svg>
<div class="b" style="left:1653px;top:662.0px;width:82px;height:22px;border:1px dashed #1e8ff5;border-radius:3px;"></div>
<div class="t " style="top:663px;font-size:10px;line-height:20px;color:#222;left:1671.70px;transform:scaleX(0.9227);transform-origin:left center;">Drop Zone</div>
<div class="b" style="left:1855.5px;top:671.8px;width:3px;height:3px;background:#222;border-radius:50%;"></div>
<div class="b" style="left:1859.9px;top:671.8px;width:3px;height:3px;background:#222;border-radius:50%;"></div>
<div class="b" style="left:1864.3px;top:671.8px;width:3px;height:3px;background:#222;border-radius:50%;"></div>
<div class="b" style="left:213px;top:697px;width:19px;height:68px;background:#f2f2f2;"></div>
<div class="b" style="left:233px;top:697px;width:219px;height:68px;background:#f2f2f2;"></div>
<div class="b" style="left:453px;top:697px;width:97px;height:68px;background:#f2f2f2;"></div>
<div class="b" style="left:551px;top:697px;width:37px;height:68px;background:#f2f2f2;"></div>
<div class="b" style="left:589px;top:697px;width:30px;height:68px;background:#f2f2f2;"></div>
<div class="b" style="left:620px;top:697px;width:133px;height:68px;background:#f2f2f2;"></div>
<div class="b" style="left:754px;top:697px;width:115px;height:68px;background:#f2f2f2;"></div>
<div class="b" style="left:870px;top:697px;width:73px;height:68px;background:#f2f2f2;"></div>
<div class="b" style="left:944px;top:697px;width:81px;height:68px;background:#f2f2f2;"></div>
<div class="b" style="left:1026px;top:697px;width:94px;height:68px;background:#f2f2f2;"></div>
<div class="b" style="left:1121px;top:697px;width:160px;height:68px;background:#f2f2f2;"></div>
<div class="b" style="left:1282px;top:697px;width:219px;height:68px;background:#f2f2f2;"></div>
<div class="b" style="left:1502px;top:697px;width:144px;height:68px;background:#f2f2f2;"></div>
<div class="b" style="left:1647px;top:697px;width:107px;height:68px;background:#f2f2f2;"></div>
<div class="b" style="left:1755px;top:697px;width:87px;height:68px;background:#f2f2f2;"></div>
<div class="b" style="left:1843px;top:697px;width:33px;height:68px;background:#f2f2f2;"></div>
<div class="b" style="left:217.1px;top:725.1px;width:12.2px;height:12.2px;border:2px solid #4587ad;background:linear-gradient(135deg,#fff 42%,#e8eaed 58%);"></div>
<svg class="b" style="left:262.3px;top:726.2px;" width="7.4" height="11.6" viewBox="0 0 7.4 11.6"><path d="M1.2 1l4.8 4.8L1.2 10.6" fill="none" stroke="#444" stroke-width="2.8"/></svg>
<div class="t " style="top:721px;font-size:15px;line-height:20px;color:#555;left:276.30px;">Software Part</div>
<div class="t " style="top:721px;font-size:15px;line-height:20px;color:#3f86c8;left:759.50px;">A-0000801-01</div>
<div class="t " style="top:721px;font-size:15px;line-height:20px;color:#555;left:875.50px;">A</div>
<div class="t " style="top:721px;font-size:15px;line-height:20px;color:#555;left:949.50px;">In Work</div>
<div class="t " style="top:721px;font-size:15px;line-height:20px;color:#555;right:803.50px;">1.0</div>
<div class="t " style="top:704px;font-size:15px;line-height:20px;color:#555;font-weight:bold;left:1127.00px;">Exhaust chipset</div>
<div class="t " style="top:721px;font-size:15px;line-height:20px;color:#f01414;left:1287.50px;">2021-09-27</div>
<svg class="b" style="left:0;top:0;" width="1898" height="723" viewBox="0 0 1898 723"><circle cx="466.9" cy="732.0" r="7.7" fill="url(#gt)"/><path d="M463.30 728.30 L468.80 728.30 L467.40 729.90 L470.00 732.90 L470.00 736.60 L466.80 736.60 L466.80 734.10 L464.80 731.90 L463.30 733.60Z" fill="#fff"/><path d="M560.1 732.0 C563.2 724.1 572.6 724.1 575.7 732.0 C572.6 739.9 563.2 739.9 560.1 732.0Z" fill="#fdf6ee" stroke="#f4a55c" stroke-width="1.25"/><circle cx="567.9" cy="732.0" r="4.4" fill="url(#ir)"/><circle cx="568.1" cy="732.1" r="1.6" fill="#34465a"/><rect x="597.75" y="727.15" width="10.5" height="11.7" fill="url(#cb)" stroke="#f57c00" stroke-width="1.3"/><path d="M599.2 727.8 V725.2 H601 Q603.2 723.2 605.4 725.2 H607.2 V727.8Z" fill="#5a7488"/></svg>
<div class="b" style="left:1653px;top:720.0px;width:82px;height:22px;border:1px dashed #1e8ff5;border-radius:3px;"></div>
<div class="t " style="top:721px;font-size:10px;line-height:20px;color:#222;left:1671.70px;transform:scaleX(0.9227);transform-origin:left center;">Drop Zone</div>
<div class="b" style="left:1855.5px;top:729.8px;width:3px;height:3px;background:#222;border-radius:50%;"></div>
<div class="b" style="left:1859.9px;top:729.8px;width:3px;height:3px;background:#222;border-radius:50%;"></div>
<div class="b" style="left:1864.3px;top:729.8px;width:3px;height:3px;background:#222;border-radius:50%;"></div>
<div class="b" style="left:217.1px;top:319.1px;width:12.2px;height:12.2px;border:2px solid #4587ad;background:linear-gradient(135deg,#fff 42%,#e8eaed 58%);"></div>
<svg width="0" height="0" style="position:absolute"><defs><linearGradient id="gt" x1="0" y1="0" x2="1" y2="1"><stop offset=".48" stop-color="#30b0f3"/><stop offset=".56" stop-color="#1797e2"/></linearGradient><linearGradient id="cb" x1="0" y1="0" x2="1" y2="1"><stop offset=".5" stop-color="#fff"/><stop offset=".5" stop-color="#e9ecee"/></linearGradient><linearGradient id="ir" x1="0" y1="0" x2="1" y2="1"><stop offset=".45" stop-color="#58bcf5"/><stop offset=".55" stop-color="#2b9ee8"/></linearGradient></defs></svg>
<svg class="b" style="left:0;top:0;" width="1898" height="723" viewBox="0 0 1898 723"><g fill="none" stroke="#fff" stroke-width="2.5" stroke-linecap="round"><path d="M15.3 -1 C13.5 3.5 9.5 6.5 5.6 8.2"/><path d="M23.5 7.2 C19 6.6 13.2 7.6 12.6 10.2 C12 13 20.6 15.6 21.6 18.8 C22.3 21.4 14 21.6 8.2 20.6"/><path d="M-1 15.2 C3 13 7.6 12.6 8 14.6 C8.4 17.6 3.6 21.4 -1 23.2"/></g><circle cx="1114" cy="9.2" r="6" fill="none" stroke="#bdbdbd" stroke-width="1.4"/><path d="M1118.6 13.9L1124.2 19.2" stroke="#bdbdbd" stroke-width="2.4" stroke-linecap="round"/><path d="M1147 -1 L1155.2 -1 L1166.6 12.6 L1159 19.4 L1147 8.2Z" fill="none" stroke="#fff" stroke-width="1.8" stroke-linejoin="round"/><rect x="1149.2" y="3" width="3.8" height="3" fill="#fff"/><path d="M1186 4 H1196.2 L1199.3 11 V17 H1182.8 V11Z M1187.8 6.2 L1185.6 10.6 H1188 L1189.4 12.6 H1192.8 L1194.2 10.6 H1196.6 L1194.4 6.2Z" fill="#fff" fill-rule="evenodd"/><circle cx="1204.9" cy="1" r="5.4" fill="#5f86a6" stroke="#dfe8ef" stroke-width="1"/><rect x="1204" y="-1" width="1.8" height="3.2" fill="#fff"/><rect x="1204" y="3" width="1.8" height="1.6" fill="#fff"/><path d="M1667 15.8 L1671.2 19 L1675.4 15.8" fill="none" stroke="#fff" stroke-width="2" stroke-linecap="round" stroke-linejoin="round"/><circle cx="1709" cy="9.7" r="9.3" fill="none" stroke="#fff" stroke-width="1.7"/><circle cx="1709" cy="6.3" r="3" fill="#fff"/><path d="M1703.6 15.4 C1703.6 11.4 1705.6 10.2 1709 10.2 C1712.4 10.2 1714.4 11.4 1714.4 15.4Z" fill="#fff"/><path d="M1753 1.2 V18.4 M1744.4 9.8 H1761.6" stroke="#fff" stroke-width="3.2"/><path d="M1797.8 0.4 L1806.6 8.6 L1797.8 16.2 V11.6 C1792.6 11.6 1789.6 13.6 1787.2 18.6 C1787.6 10.6 1791.6 6 1797.8 5.4Z" fill="none" stroke="#fff" stroke-width="1.6" stroke-linejoin="round"/><path d="M1831 10 L1841 0.8 L1851 10 M1833.6 8.4 V18.6 H1848.4 V8.4" fill="none" stroke="#fff" stroke-width="1.8" stroke-linejoin="miter"/><rect x="1838.6" y="12.2" width="4.8" height="6" fill="#fff"/><circle cx="1885" cy="9.7" r="9.3" fill="none" stroke="#fff" stroke-width="1.7"/><path d="M1881.6 6.6 C1881.8 4.2 1883.2 3.4 1885 3.4 C1887 3.4 1888.4 4.6 1888.4 6.4 C1888.4 8.6 1885 8.8 1885 11.6" fill="none" stroke="#fff" stroke-width="2.1"/><rect x="1883.9" y="13.4" width="2.2" height="2.3" fill="#fff"/></svg>
<div class="b" style="left:34.4px;top:-10.6px;width:71.6px;height:71.6px;border-radius:50%;background:#005686;box-shadow:0 1px 2px rgba(0,40,70,.55);"></div>
<div class="b" style="left:38.3px;top:-5.7px;width:63.4px;height:63.4px;border-radius:50%;border:1px solid #a9bccd;background:conic-gradient(from 0deg,#6f92b4 0deg,#3f5e7e 30deg,#4a6785 60deg,#2c3f55 100deg,#3b5878 135deg,#5c81a6 160deg,#8db0cf 180deg,#5c81a6 200deg,#2a3d55 235deg,#1f2e42 265deg,#4c6f92 300deg,#9dbbd6 335deg,#6f92b4 360deg);"></div>
<div class="b" style="left:52.3px;top:8.3px;width:35.4px;height:35.4px;border-radius:50%;border:1.6px solid #16222e;background:radial-gradient(circle at 50% 25%,#5d7891,#3f5872 70%,#37506a);"></div>
<svg class="b" style="left:0;top:0;" width="1898" height="723" viewBox="0 0 1898 723"><path d="M63.2 17.2 L79.2 25.6 L63.2 34.6Z" fill="none" stroke="#e8eef4" stroke-width="1" stroke-linejoin="round"/><g stroke="#8fa9c2" stroke-width="0.7" opacity=".8"><path d="M49.6 5.4l4.6 4.6M90.4 5.4l-4.6 4.6M49.6 46.4l4.6-4.6M90.4 46.4l-4.6-4.6"/></g><g fill="#fff" font-family="Liberation Sans, sans-serif" font-weight="bold" font-size="6.5px"><text x="41.2" y="28.6" textLength="7.8" lengthAdjust="spacingAndGlyphs">3D</text><text x="65.4" y="53.2" textLength="10" lengthAdjust="spacingAndGlyphs">V.R</text><text x="92.6" y="29" font-size="7px">i</text><text x="68" y="4.6" font-size="6px">Y</text></g><path d="M95.4 22.6l.9 -2" stroke="#fff" stroke-width=".7"/></svg>
<svg class="b" style="left:0;top:0;" width="1898" height="723" viewBox="0 0 1898 723"><path d="M184.6 81.4 L188.2 77 L191.8 81.4Z" fill="#505050"/><path d="M11 172.4 L17.2 177 L11 181.6Z" fill="#222"/><path d="M11 420.4 L17.2 425 L11 429.6Z" fill="#222"/><path d="M11 451.4 L17.2 456 L11 460.6Z" fill="#222"/><path d="M7.6 594.2 H17 L12.3 600.2Z" fill="#222"/><path d="M218.2 83.4 L224.9 77.6 L227.4 79.7 V78.2 H229.4 V81.4 L231.8 83.4 L230.9 84.4 L224.9 79.4 L219.1 84.4Z M220.2 84.4 L224.9 80.6 L229.8 84.4 V88.8 H226.4 V85.6 H223.6 V88.8 H220.2Z" fill="#3f7dc8"/><path d="M1880.6 42 H1889 V50.4 L1886.6 48 C1884 50.6 1883.8 54.6 1885.4 59 C1880.4 56 1878.6 50 1883 44.4Z" fill="#3c3c3c"/><path d="M1885.6 52 C1885.2 54.4 1885.6 56.6 1886.4 58.6" stroke="#9ec4e6" stroke-width=".8" fill="none"/><path d="M1847.70 122.55 L1849.38 122.67 L1849.38 125.13 L1847.70 125.25 L1847.34 126.13 L1848.44 127.40 L1846.70 129.14 L1845.43 128.04 L1844.55 128.40 L1844.43 130.08 L1841.97 130.08 L1841.85 128.40 L1840.97 128.04 L1839.70 129.14 L1837.96 127.40 L1839.06 126.13 L1838.70 125.25 L1837.02 125.13 L1837.02 122.67 L1838.70 122.55 L1839.06 121.67 L1837.96 120.40 L1839.70 118.66 L1840.97 119.76 L1841.85 119.40 L1841.97 117.72 L1844.43 117.72 L1844.55 119.40 L1845.43 119.76 L1846.70 118.66 L1848.44 120.40 L1847.34 121.67Z M1846.10 123.90 A2.9 2.9 0 1 0 1840.30 123.90 A2.9 2.9 0 1 0 1846.10 123.90Z" fill="#111" fill-rule="evenodd" /><path d="M1847.70 186.65 L1849.38 186.77 L1849.38 189.23 L1847.70 189.35 L1847.34 190.23 L1848.44 191.50 L1846.70 193.24 L1845.43 192.14 L1844.55 192.50 L1844.43 194.18 L1841.97 194.18 L1841.85 192.50 L1840.97 192.14 L1839.70 193.24 L1837.96 191.50 L1839.06 190.23 L1838.70 189.35 L1837.02 189.23 L1837.02 186.77 L1838.70 186.65 L1839.06 185.77 L1837.96 184.50 L1839.70 182.76 L1840.97 183.86 L1841.85 183.50 L1841.97 181.82 L1844.43 181.82 L1844.55 183.50 L1845.43 183.86 L1846.70 182.76 L1848.44 184.50 L1847.34 185.77Z M1846.10 188.00 A2.9 2.9 0 1 0 1840.30 188.00 A2.9 2.9 0 1 0 1846.10 188.00Z" fill="#111" fill-rule="evenodd" /><path d="M243.59 186.54 L245.27 186.69 L245.27 189.31 L243.59 189.46 L243.19 190.42 L244.27 191.72 L242.42 193.57 L241.12 192.49 L240.16 192.89 L240.01 194.57 L237.39 194.57 L237.24 192.89 L236.28 192.49 L234.98 193.57 L233.13 191.72 L234.21 190.42 L233.81 189.46 L232.13 189.31 L232.13 186.69 L233.81 186.54 L234.21 185.58 L233.13 184.28 L234.98 182.43 L236.28 183.51 L237.24 183.11 L237.39 181.43 L240.01 181.43 L240.16 183.11 L241.12 183.51 L242.42 182.43 L244.27 184.28 L243.19 185.58Z M240.80 188.00 A2.1 2.1 0 1 0 236.60 188.00 A2.1 2.1 0 1 0 240.80 188.00Z" fill="#1db6ae" fill-rule="evenodd" stroke="#1db6ae" stroke-width=".4" stroke-linejoin="round"/><path d="M248.62 183.09 L249.68 183.12 L249.68 184.88 L248.62 184.91 L248.30 185.47 L248.80 186.40 L247.28 187.28 L246.73 186.38 L246.07 186.38 L245.52 187.28 L244.00 186.40 L244.50 185.47 L244.18 184.91 L243.12 184.88 L243.12 183.12 L244.18 183.09 L244.50 182.53 L244.00 181.60 L245.52 180.72 L246.07 181.62 L246.73 181.62 L247.28 180.72 L248.80 181.60 L248.30 182.53Z M247.55 184.00 A1.15 1.15 0 1 0 245.25 184.00 A1.15 1.15 0 1 0 247.55 184.00Z" fill="#1db6ae" fill-rule="evenodd" stroke="#1db6ae" stroke-width=".4" stroke-linejoin="round"/><path d="M248.62 191.19 L249.68 191.22 L249.68 192.98 L248.62 193.01 L248.30 193.57 L248.80 194.50 L247.28 195.38 L246.73 194.48 L246.07 194.48 L245.52 195.38 L244.00 194.50 L244.50 193.57 L244.18 193.01 L243.12 192.98 L243.12 191.22 L244.18 191.19 L244.50 190.63 L244.00 189.70 L245.52 188.82 L246.07 189.72 L246.73 189.72 L247.28 188.82 L248.80 189.70 L248.30 190.63Z M247.55 192.10 A1.15 1.15 0 1 0 245.25 192.10 A1.15 1.15 0 1 0 247.55 192.10Z" fill="#1db6ae" fill-rule="evenodd" stroke="#1db6ae" stroke-width=".4" stroke-linejoin="round"/><path d="M362.09 186.54 L363.77 186.69 L363.77 189.31 L362.09 189.46 L361.69 190.42 L362.77 191.72 L360.92 193.57 L359.62 192.49 L358.66 192.89 L358.51 194.57 L355.89 194.57 L355.74 192.89 L354.78 192.49 L353.48 193.57 L351.63 191.72 L352.71 190.42 L352.31 189.46 L350.63 189.31 L350.63 186.69 L352.31 186.54 L352.71 185.58 L351.63 184.28 L353.48 182.43 L354.78 183.51 L355.74 183.11 L355.89 181.43 L358.51 181.43 L358.66 183.11 L359.62 183.51 L360.92 182.43 L362.77 184.28 L361.69 185.58Z M359.30 188.00 A2.1 2.1 0 1 0 355.10 188.00 A2.1 2.1 0 1 0 359.30 188.00Z" fill="#1db6ae" fill-rule="evenodd" stroke="#1db6ae" stroke-width=".4" stroke-linejoin="round"/><path d="M367.12 183.09 L368.18 183.12 L368.18 184.88 L367.12 184.91 L366.80 185.47 L367.30 186.40 L365.78 187.28 L365.23 186.38 L364.57 186.38 L364.02 187.28 L362.50 186.40 L363.00 185.47 L362.68 184.91 L361.62 184.88 L361.62 183.12 L362.68 183.09 L363.00 182.53 L362.50 181.60 L364.02 180.72 L364.57 181.62 L365.23 181.62 L365.78 180.72 L367.30 181.60 L366.80 182.53Z M366.05 184.00 A1.15 1.15 0 1 0 363.75 184.00 A1.15 1.15 0 1 0 366.05 184.00Z" fill="#1db6ae" fill-rule="evenodd" stroke="#1db6ae" stroke-width=".4" stroke-linejoin="round"/><path d="M367.12 191.19 L368.18 191.22 L368.18 192.98 L367.12 193.01 L366.80 193.57 L367.30 194.50 L365.78 195.38 L365.23 194.48 L364.57 194.48 L364.02 195.38 L362.50 194.50 L363.00 193.57 L362.68 193.01 L361.62 192.98 L361.62 191.22 L362.68 191.19 L363.00 190.63 L362.50 189.70 L364.02 188.82 L364.57 189.72 L365.23 189.72 L365.78 188.82 L367.30 189.70 L366.80 190.63Z M366.05 192.10 A1.15 1.15 0 1 0 363.75 192.10 A1.15 1.15 0 1 0 366.05 192.10Z" fill="#1db6ae" fill-rule="evenodd" stroke="#1db6ae" stroke-width=".4" stroke-linejoin="round"/><path d="M447.99 186.54 L449.67 186.69 L449.67 189.31 L447.99 189.46 L447.59 190.42 L448.67 191.72 L446.82 193.57 L445.52 192.49 L444.56 192.89 L444.41 194.57 L441.79 194.57 L441.64 192.89 L440.68 192.49 L439.38 193.57 L437.53 191.72 L438.61 190.42 L438.21 189.46 L436.53 189.31 L436.53 186.69 L438.21 186.54 L438.61 185.58 L437.53 184.28 L439.38 182.43 L440.68 183.51 L441.64 183.11 L441.79 181.43 L444.41 181.43 L444.56 183.11 L445.52 183.51 L446.82 182.43 L448.67 184.28 L447.59 185.58Z M445.20 188.00 A2.1 2.1 0 1 0 441.00 188.00 A2.1 2.1 0 1 0 445.20 188.00Z" fill="#1db6ae" fill-rule="evenodd" stroke="#1db6ae" stroke-width=".4" stroke-linejoin="round"/><path d="M453.02 183.09 L454.08 183.12 L454.08 184.88 L453.02 184.91 L452.70 185.47 L453.20 186.40 L451.68 187.28 L451.13 186.38 L450.47 186.38 L449.92 187.28 L448.40 186.40 L448.90 185.47 L448.58 184.91 L447.52 184.88 L447.52 183.12 L448.58 183.09 L448.90 182.53 L448.40 181.60 L449.92 180.72 L450.47 181.62 L451.13 181.62 L451.68 180.72 L453.20 181.60 L452.70 182.53Z M451.95 184.00 A1.15 1.15 0 1 0 449.65 184.00 A1.15 1.15 0 1 0 451.95 184.00Z" fill="#1db6ae" fill-rule="evenodd" stroke="#1db6ae" stroke-width=".4" stroke-linejoin="round"/><path d="M453.02 191.19 L454.08 191.22 L454.08 192.98 L453.02 193.01 L452.70 193.57 L453.20 194.50 L451.68 195.38 L451.13 194.48 L450.47 194.48 L449.92 195.38 L448.40 194.50 L448.90 193.57 L448.58 193.01 L447.52 192.98 L447.52 191.22 L448.58 191.19 L448.90 190.63 L448.40 189.70 L449.92 188.82 L450.47 189.72 L451.13 189.72 L451.68 188.82 L453.20 189.70 L452.70 190.63Z M451.95 192.10 A1.15 1.15 0 1 0 449.65 192.10 A1.15 1.15 0 1 0 451.95 192.10Z" fill="#1db6ae" fill-rule="evenodd" stroke="#1db6ae" stroke-width=".4" stroke-linejoin="round"/><path d="M226.2 243.2 L231 238.4 L235.8 243.2" fill="none" stroke="#8c8c8c" stroke-width="2.8"/><g fill="none" stroke="#9a9a9a" stroke-width="1.6"><path d="M1772.4 243.6 A5.4 5.4 0 0 1 1779.4 235.9"/><path d="M1782.2 238.2 A5.4 5.4 0 0 1 1775.2 245.9"/></g><path d="M1777.2 233.2 L1782.6 236 L1778.4 239.6Z M1777.4 248.6 L1772 245.8 L1776.2 242.2Z" fill="#9a9a9a"/><rect x="1790.4" y="236.6" width="11.4" height="8.8" fill="none" stroke="#9a9a9a" stroke-width="1.2"/><rect x="1789.8" y="235" width="12.6" height="2.8" fill="#9a9a9a"/><path d="M1811.4 238.6 A6 6 0 1 1 1813.6 246.4" fill="none" stroke="#9a9a9a" stroke-width="1.7"/><path d="M1808.6 234.4 L1809.4 240.8 L1815 238.4Z" fill="#9a9a9a"/><rect x="1828.8" y="241.4" width="10.4" height="5.8" fill="#9a9a9a"/><path d="M1830.6 241.6 V239 A3.4 3.4 0 0 1 1837.4 239 V240.2" fill="none" stroke="#9a9a9a" stroke-width="1.7"/><rect x="1833.4" y="242.6" width="1.4" height="3.4" fill="#fff"/><path d="M1848.4 236.2 L1857.8 245.2 M1857.8 236.2 L1848.4 245.2" stroke="#9a9a9a" stroke-width="2.6"/></svg>
<svg class="b" style="left:0;top:0;" width="1898" height="723" viewBox="0 0 1898 723"><path d="M226 279 V274.2 H231 M237.4 274.2 H242.4 V279 M242.4 285 V289.8 H237.4 M231 289.8 H226 V285" fill="none" stroke="#222" stroke-width="2.4"/><circle cx="429.2" cy="278.8" r="6" fill="none" stroke="#222" stroke-width="2"/><path d="M425 283.6 L418.6 290.4" stroke="#222" stroke-width="2.8"/><path d="M494.50 281.90 L514.90 281.90 M497.49 274.69 L511.91 289.11 M504.70 271.70 L504.70 292.10 M511.91 274.69 L497.49 289.11 " stroke="#222" stroke-width="3.2"/><path d="M704.02 280.01 L706.53 280.14 L706.53 283.66 L704.02 283.79 L703.51 285.03 L705.18 286.90 L702.70 289.38 L700.83 287.71 L699.59 288.22 L699.46 290.73 L695.94 290.73 L695.81 288.22 L694.57 287.71 L692.70 289.38 L690.22 286.90 L691.89 285.03 L691.38 283.79 L688.87 283.66 L688.87 280.14 L691.38 280.01 L691.89 278.77 L690.22 276.90 L692.70 274.42 L694.57 276.09 L695.81 275.58 L695.94 273.07 L699.46 273.07 L699.59 275.58 L700.83 276.09 L702.70 274.42 L705.18 276.90 L703.51 278.77Z M701.80 281.90 A4.1 4.1 0 1 0 693.60 281.90 A4.1 4.1 0 1 0 701.80 281.90Z" fill="#222" fill-rule="evenodd" /><circle cx="771.6" cy="282.2" r="4.2" fill="#6ab82a"/><path d="M769.2 282.2 H774 M771.6 279.8 V284.6" stroke="#fff" stroke-width="1.4"/><rect x="777" y="274.5" width="9" height="1.4" fill="#5c7f92"/><rect x="777" y="277.90000000000003" width="9" height="1.4" fill="#5c7f92"/><rect x="777" y="281.3" width="9" height="1.4" fill="#5c7f92"/><rect x="777" y="284.8" width="9" height="1.4" fill="#5c7f92"/><rect x="777" y="288.3" width="9" height="1.4" fill="#5c7f92"/><path d="M890.2 275.4 L897.2 282 L890.2 288.6" fill="none" stroke="#222" stroke-width="3.4"/><path d="M996.5 277 V288.5 H1001.5 M996.5 281.9 H1001.5" fill="none" stroke="#5c7f92" stroke-width="1.2"/><circle cx="996.5" cy="275.5" r="1.8" fill="#f57c00"/><circle cx="1008.1" cy="275.5" r="1.8" fill="#f57c00"/><circle cx="1001.8" cy="281.9" r="1.8" fill="#f57c00"/><circle cx="1008.1" cy="281.9" r="1.8" fill="#f57c00"/><circle cx="1001.8" cy="288.5" r="1.8" fill="#f57c00"/><circle cx="1008.1" cy="288.5" r="1.8" fill="#f57c00"/><rect x="1082" y="273" width="17.2" height="19" fill="#bfe2fa" stroke="#2a9fe6" stroke-width="1"/><path d="M1084.87 273 V292 M1087.74 273 V292 M1090.61 273 V292 M1093.48 273 V292 M1096.35 273 V292 M1082 275.71 H1099.2 M1082 278.42 H1099.2 M1082 281.13 H1099.2 M1082 283.84 H1099.2 M1082 286.55 H1099.2 M1082 289.26 H1099.2 " stroke="#3aa6ea" stroke-width="0.9"/><rect x="1176.6" y="275.6" width="13.6" height="15.8" rx="1.2" fill="none" stroke="#222" stroke-width="2"/><path d="M1180.2 275.6 V273.6 H1182 A1.5 1.5 0 0 1 1185 273.6 H1186.6 V275.6" fill="#eee" stroke="#222" stroke-width="1.6"/><rect x="1303" y="273.4" width="10.2" height="9.6" fill="#d9e9f1" stroke="#b9cfdb" stroke-width=".6"/><path d="M1304.6 275.6 H1311 M1304.6 277.6 H1311 M1304.6 279.6 H1309" stroke="#8fa8b6" stroke-width=".8"/><path d="M1299.2 282 H1316.4 L1318 284.4 V291.8 H1297 V284.4Z" fill="#4a6778"/><path d="M1299.2 282 H1316.4 L1318 284.4 H1297Z" fill="#6f8b9b"/><rect x="1300.8" y="288.6" width="13.4" height="1.9" fill="#e6f4ff"/><circle cx="1315.4" cy="286" r=".8" fill="#7bd03a"/><path d="M1390.9 276.8 L1376 282.2 L1390.9 288.5" fill="none" stroke="#4a7ea6" stroke-width="1.6"/><circle cx="1390.9" cy="276.8" r="3.1" fill="#2aa3ec"/><circle cx="1376.4" cy="282.2" r="3.1" fill="#2aa3ec"/><circle cx="1390.9" cy="288.5" r="3.1" fill="#2aa3ec"/><path d="M1482.6 276 H1473 A1.4 1.4 0 0 0 1471.6 277.4 V289.4 A1.4 1.4 0 0 0 1473 290.8 H1485.6 A1.4 1.4 0 0 0 1487 289.4 V284" fill="none" stroke="#222" stroke-width="2.5"/><path d="M1476.8 287.8 L1477.8 283.4 L1486.8 274.4 L1490.4 278 L1481.4 286.8Z" fill="#222"/><path d="M1488 273.2 L1489.4 271.9 A1 1 0 0 1 1490.8 271.9 L1493.1 274.2 A1 1 0 0 1 1493.1 275.6 L1491.7 277Z" fill="#222"/><path d="M1552.6 273.2 H1566 L1569.4 276.4 V289.6 A1.4 1.4 0 0 1 1568 291 H1552.6 A1.4 1.4 0 0 1 1551.2 289.6 V274.6 A1.4 1.4 0 0 1 1552.6 273.2Z" fill="#dcdcdc"/><rect x="1554.2" y="274.6" width="9.6" height="5" fill="#eee"/><circle cx="1560.3" cy="286" r="2.3" fill="#eee"/><rect x="1713.8" y="275.8" width="16" height="2.4" fill="#4f7386"/><rect x="1713.8" y="281.40000000000003" width="16" height="2.4" fill="#4f7386"/><rect x="1713.8" y="287.0" width="16" height="2.4" fill="#4f7386"/><path d="M1863.21 280.89 L1865.78 281.01 L1865.78 283.99 L1863.21 284.11 L1862.86 285.20 L1864.86 286.81 L1863.12 289.22 L1860.96 287.81 L1860.04 288.48 L1860.71 290.96 L1857.89 291.88 L1856.97 289.48 L1855.83 289.48 L1854.91 291.88 L1852.09 290.96 L1852.76 288.48 L1851.84 287.81 L1849.68 289.22 L1847.94 286.81 L1849.94 285.20 L1849.59 284.11 L1847.02 283.99 L1847.02 281.01 L1849.59 280.89 L1849.94 279.80 L1847.94 278.19 L1849.68 275.78 L1851.84 277.19 L1852.76 276.52 L1852.09 274.04 L1854.91 273.12 L1855.83 275.52 L1856.97 275.52 L1857.89 273.12 L1860.71 274.04 L1860.04 276.52 L1860.96 277.19 L1863.12 275.78 L1864.86 278.19 L1862.86 279.80Z" fill="#5f8398" fill-rule="evenodd" /><circle cx="1856.4" cy="282.5" r="6.9" fill="#86a8bc"/><circle cx="1856.4" cy="282.5" r="4.9" fill="#adc6d3"/><circle cx="1856.4" cy="282.5" r="3.3" fill="#93b2c4"/><circle cx="1856.4" cy="282.5" r="2.2" fill="#fff"/><path d="M1211 331.6 L1212.2 327.6 L1221.4 318.4 L1224.6 321.6 L1215.2 330.6Z" fill="#555"/><path d="M1222.2 317.6 L1223.2 316.8 L1226 319.8 L1225.2 320.8Z" fill="#555"/><path d="M1213.4 327.8 L1221.6 319.8" stroke="#f0f0f0" stroke-width=".7"/></svg>
<div class="b" style="left:1857px;top:253px;width:28.4px;height:36.6px;background:rgba(0,0,0,.5);border-radius:9px 0 0 9px;"></div>
<svg class="b" style="left:0;top:0;" width="1898" height="723" viewBox="0 0 1898 723"><path d="M1876.77 269.43 L1878.84 269.44 L1878.84 272.36 L1876.77 272.37 L1876.47 273.10 L1877.93 274.57 L1875.87 276.63 L1874.40 275.17 L1873.67 275.47 L1873.66 277.54 L1870.74 277.54 L1870.73 275.47 L1870.00 275.17 L1868.53 276.63 L1866.47 274.57 L1867.93 273.10 L1867.63 272.37 L1865.56 272.36 L1865.56 269.44 L1867.63 269.43 L1867.93 268.70 L1866.47 267.23 L1868.53 265.17 L1870.00 266.63 L1870.73 266.33 L1870.74 264.26 L1873.66 264.26 L1873.67 266.33 L1874.40 266.63 L1875.87 265.17 L1877.93 267.23 L1876.47 268.70Z M1874.10 270.90 A1.9 1.9 0 1 0 1870.30 270.90 A1.9 1.9 0 1 0 1874.10 270.90Z" fill="#f2f2f2" fill-rule="evenodd" /></svg>
</div></body></html>
